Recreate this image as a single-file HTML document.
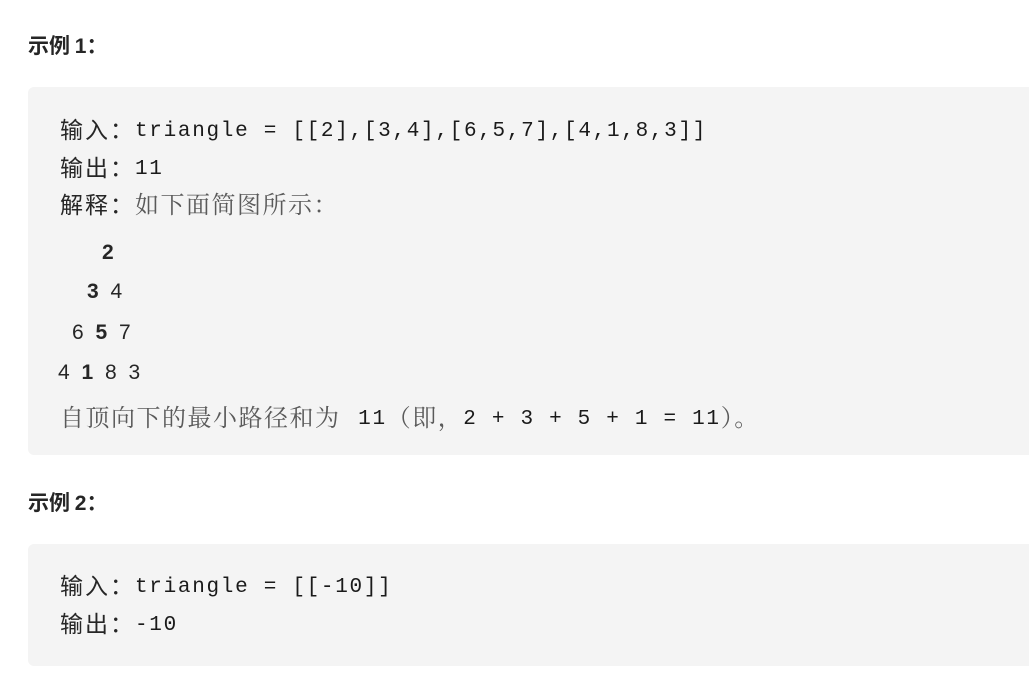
<!DOCTYPE html>
<html><head><meta charset="utf-8"><style>
body{margin:0;width:1029px;height:674px;background:#fff;overflow:hidden;position:relative;font-family:"Liberation Sans","Noto Sans CJK SC",sans-serif;color:#262626}
.h{position:absolute;left:28px;font-size:21px;font-weight:bold;color:#262626;line-height:24px;font-family:"Noto Sans CJK SC",sans-serif}
.h .n{font-family:"Liberation Sans",sans-serif}
.box{position:absolute;left:28px;width:1020px;background:#f4f4f4;border-radius:6px}
.l{position:absolute;left:60px;font-size:20px;line-height:26px;white-space:pre}
.m{font-family:"Liberation Mono",monospace;font-size:21px;letter-spacing:1.7px;color:#1a1a1a;position:relative;top:-2px}
.k{font-family:"Noto Sans CJK SC",sans-serif;font-size:23px;letter-spacing:2px;color:#262626}
.s{font-family:"Noto Serif CJK SC",serif;font-size:24px;letter-spacing:1.5px;color:#5a5a5a}
.d{font-family:"Liberation Sans",sans-serif;color:#262626;font-size:21px;word-spacing:6px}
b{font-weight:bold}
</style></head><body>
<div class="h" style="top:33px">示例 <span class="n">1</span>：</div>
<div class="box" style="top:87px;height:368px"></div>
<div class="l" style="top:115px"><span class="k">输入：</span><span class="m">triangle = [[2],[3,4],[6,5,7],[4,1,8,3]]</span></div>
<div class="l" style="top:153px"><span class="k">输出：</span><span class="m">11</span></div>
<div class="l" style="top:190px"><span class="k">解释：</span><span class="s">如下面简图所示：</span></div>
<div class="l d" style="top:240px;left:102px"><b>2</b></div>
<div class="l d" style="top:279px;left:87px"><b>3</b> 4</div>
<div class="l d" style="top:320px;left:72px">6 <b>5</b> 7</div>
<div class="l d" style="top:360px;left:58px">4 <b>1</b> 8 3</div>
<div class="l" style="top:403px"><span class="s">自顶向下的最小路径和为 </span><span class="m" style="margin-left:10px">11</span><span class="s">（即，</span><span class="m">2 + 3 + 5 + 1 = 11</span><span class="s">）。</span></div>
<div class="h" style="top:490px">示例 <span class="n">2</span>：</div>
<div class="box" style="top:544px;height:122px"></div>
<div class="l" style="top:571px"><span class="k">输入：</span><span class="m">triangle = [[-10]]</span></div>
<div class="l" style="top:609px"><span class="k">输出：</span><span class="m">-10</span></div>
</body></html>
